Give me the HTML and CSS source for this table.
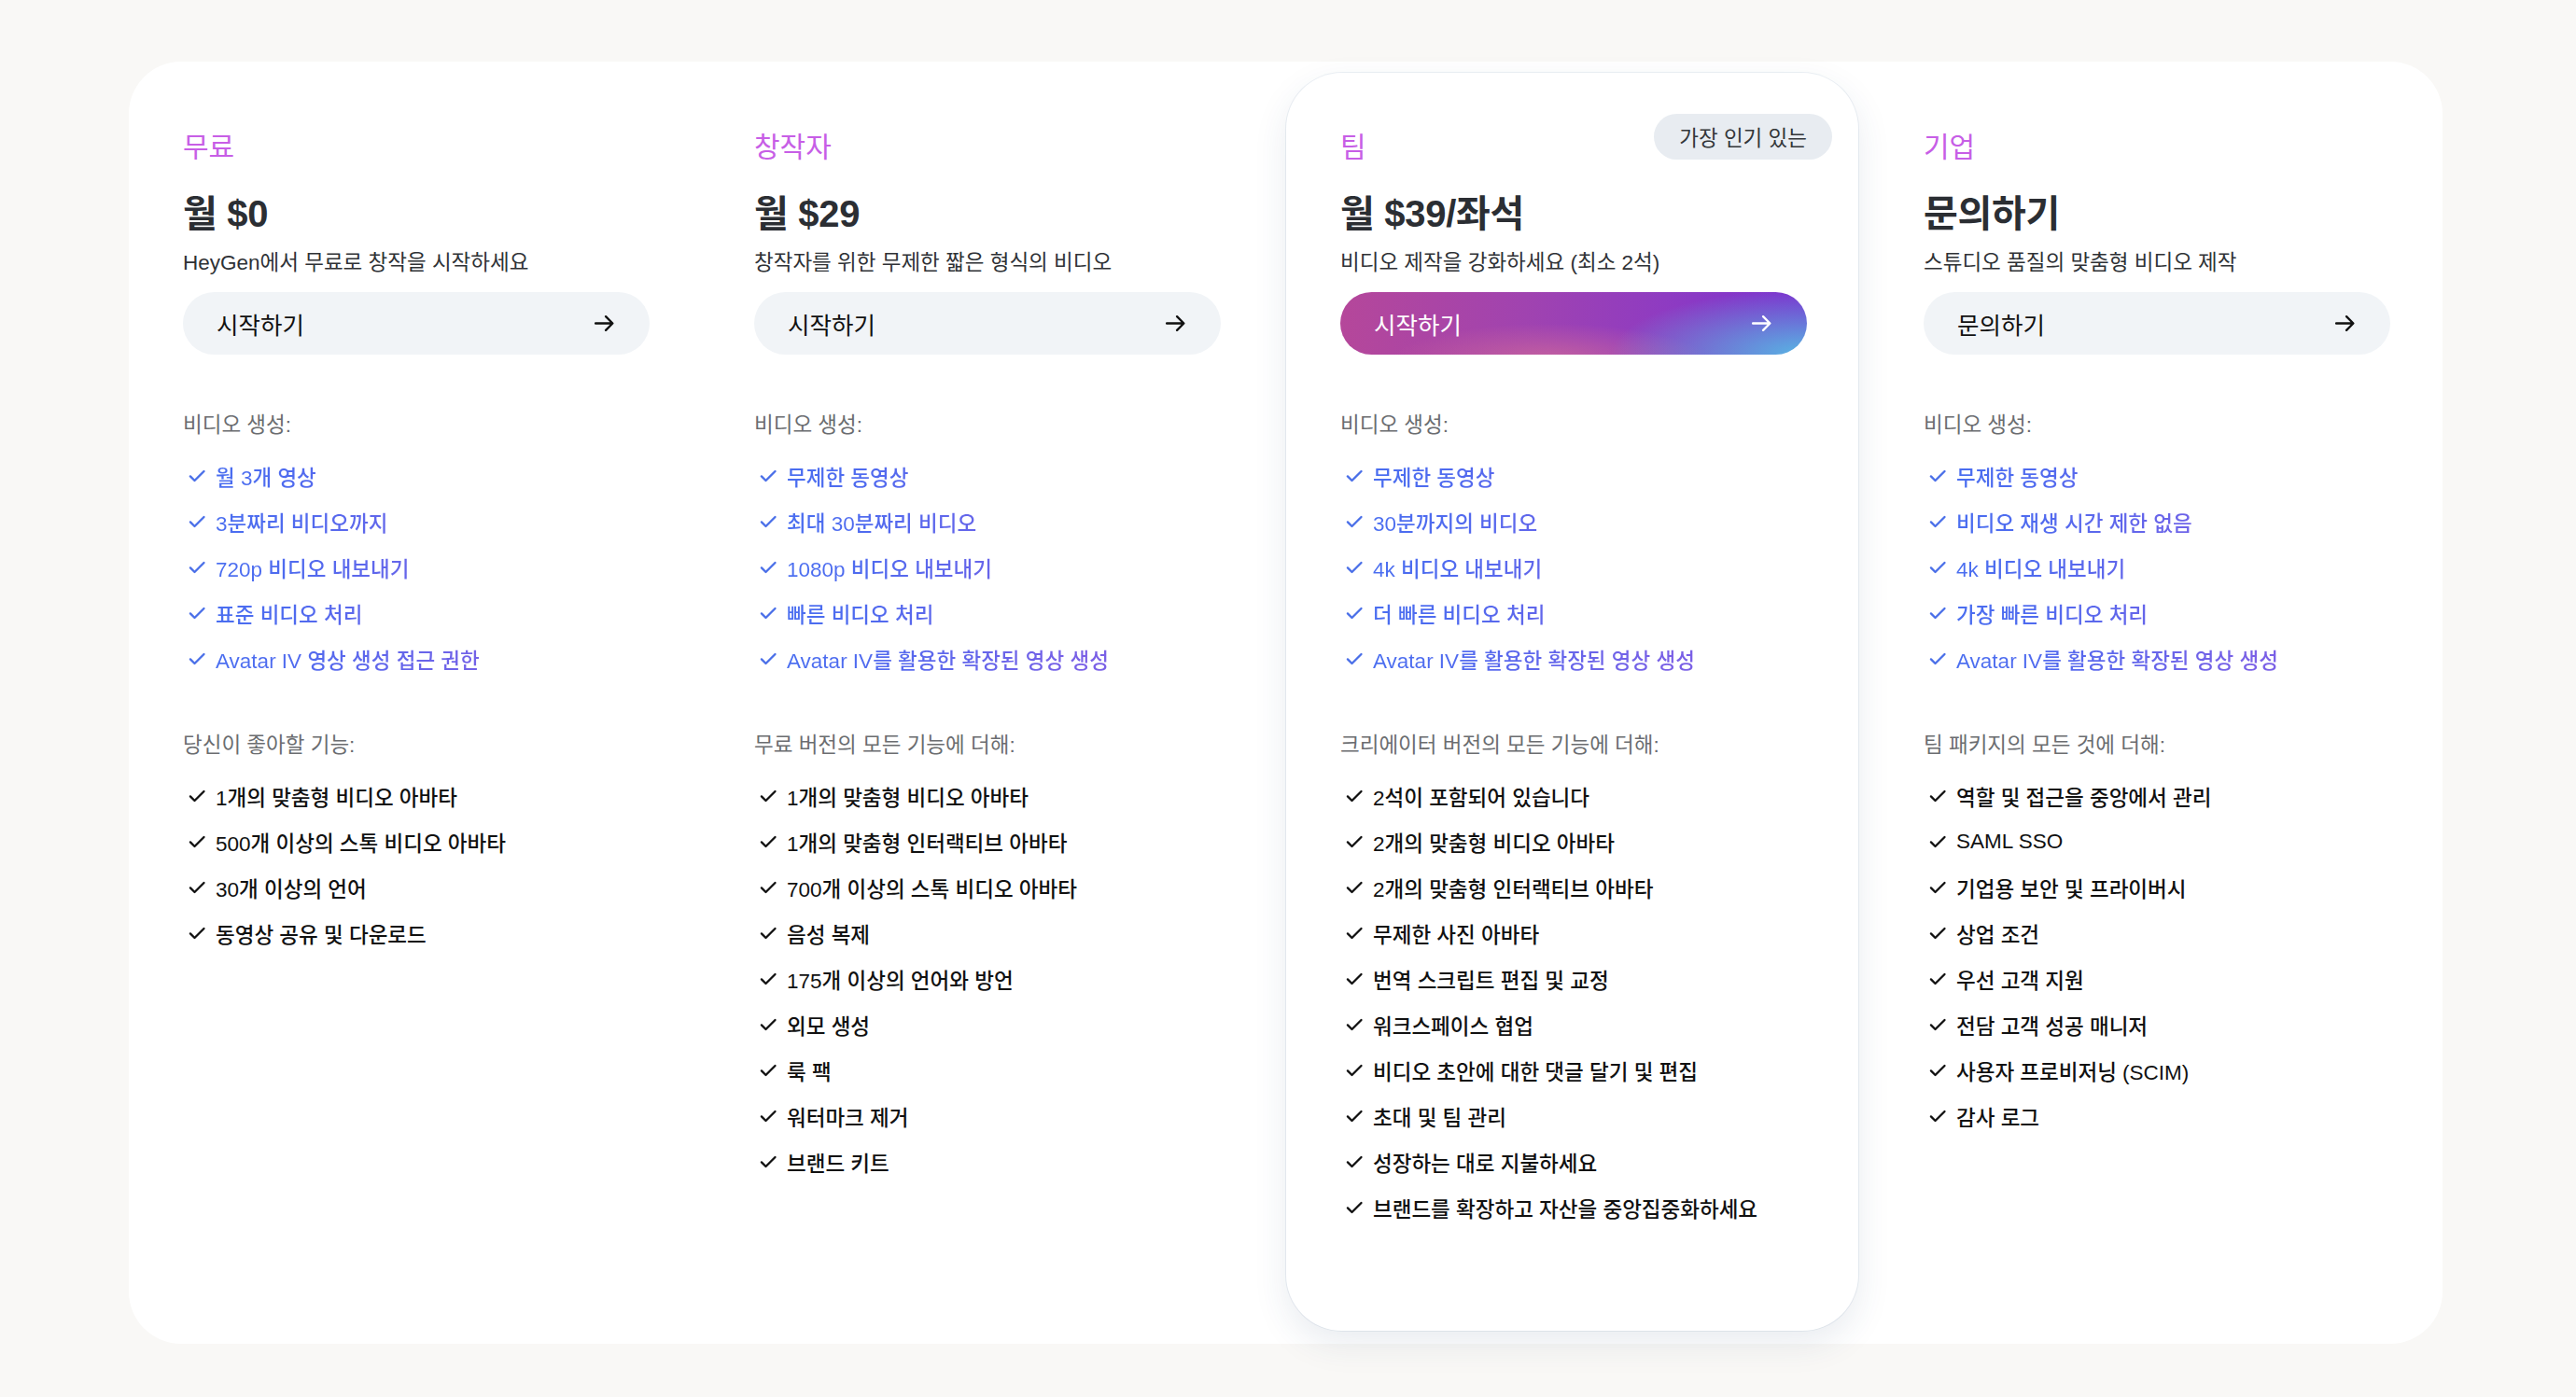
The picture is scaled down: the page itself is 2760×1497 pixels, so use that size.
FILE: index.html
```html
<!DOCTYPE html>
<html lang="ko">
<head>
<meta charset="utf-8">
<title>HeyGen 요금제</title>
<link rel="stylesheet" href="styles.css">
</head>
<body>
<main class="page">
  <section class="pricing">
    <!-- 무료 -->
    <article class="plan">
      <h3 class="plan-name">무료</h3>
      <p class="plan-price">월 $0</p>
      <p class="plan-desc">HeyGen에서 무료로 창작을 시작하세요</p>
      <a class="plan-btn" href="#"><span>시작하기</span><svg class="arrow" viewBox="0 0 24 24"><path d="M3 12h17M13.5 5l7 7-7 7"/></svg></a>
      <p class="list-title list-title-first">비디오 생성:</p>
      <ul class="features features-blue">
        <li><svg class="check" viewBox="0 0 24 24"><path d="M3.5 12.5l5.5 5.5L21 6"/></svg><span>월 3개 영상</span></li>
        <li><svg class="check" viewBox="0 0 24 24"><path d="M3.5 12.5l5.5 5.5L21 6"/></svg><span>3분짜리 비디오까지</span></li>
        <li><svg class="check" viewBox="0 0 24 24"><path d="M3.5 12.5l5.5 5.5L21 6"/></svg><span>720p 비디오 내보내기</span></li>
        <li><svg class="check" viewBox="0 0 24 24"><path d="M3.5 12.5l5.5 5.5L21 6"/></svg><span>표준 비디오 처리</span></li>
        <li><svg class="check" viewBox="0 0 24 24"><path d="M3.5 12.5l5.5 5.5L21 6"/></svg><span>Avatar IV 영상 생성 접근 권한</span></li>
      </ul>
      <p class="list-title">당신이 좋아할 기능:</p>
      <ul class="features features-dark">
        <li><svg class="check" viewBox="0 0 24 24"><path d="M3.5 12.5l5.5 5.5L21 6"/></svg><span>1개의 맞춤형 비디오 아바타</span></li>
        <li><svg class="check" viewBox="0 0 24 24"><path d="M3.5 12.5l5.5 5.5L21 6"/></svg><span>500개 이상의 스톡 비디오 아바타</span></li>
        <li><svg class="check" viewBox="0 0 24 24"><path d="M3.5 12.5l5.5 5.5L21 6"/></svg><span>30개 이상의 언어</span></li>
        <li><svg class="check" viewBox="0 0 24 24"><path d="M3.5 12.5l5.5 5.5L21 6"/></svg><span>동영상 공유 및 다운로드</span></li>
      </ul>
    </article>

    <!-- 창작자 -->
    <article class="plan">
      <h3 class="plan-name">창작자</h3>
      <p class="plan-price">월 $29</p>
      <p class="plan-desc">창작자를 위한 무제한 짧은 형식의 비디오</p>
      <a class="plan-btn" href="#"><span>시작하기</span><svg class="arrow" viewBox="0 0 24 24"><path d="M3 12h17M13.5 5l7 7-7 7"/></svg></a>
      <p class="list-title list-title-first">비디오 생성:</p>
      <ul class="features features-blue">
        <li><svg class="check" viewBox="0 0 24 24"><path d="M3.5 12.5l5.5 5.5L21 6"/></svg><span>무제한 동영상</span></li>
        <li><svg class="check" viewBox="0 0 24 24"><path d="M3.5 12.5l5.5 5.5L21 6"/></svg><span>최대 30분짜리 비디오</span></li>
        <li><svg class="check" viewBox="0 0 24 24"><path d="M3.5 12.5l5.5 5.5L21 6"/></svg><span>1080p 비디오 내보내기</span></li>
        <li><svg class="check" viewBox="0 0 24 24"><path d="M3.5 12.5l5.5 5.5L21 6"/></svg><span>빠른 비디오 처리</span></li>
        <li><svg class="check" viewBox="0 0 24 24"><path d="M3.5 12.5l5.5 5.5L21 6"/></svg><span>Avatar IV를 활용한 확장된 영상 생성</span></li>
      </ul>
      <p class="list-title">무료 버전의 모든 기능에 더해:</p>
      <ul class="features features-dark">
        <li><svg class="check" viewBox="0 0 24 24"><path d="M3.5 12.5l5.5 5.5L21 6"/></svg><span>1개의 맞춤형 비디오 아바타</span></li>
        <li><svg class="check" viewBox="0 0 24 24"><path d="M3.5 12.5l5.5 5.5L21 6"/></svg><span>1개의 맞춤형 인터랙티브 아바타</span></li>
        <li><svg class="check" viewBox="0 0 24 24"><path d="M3.5 12.5l5.5 5.5L21 6"/></svg><span>700개 이상의 스톡 비디오 아바타</span></li>
        <li><svg class="check" viewBox="0 0 24 24"><path d="M3.5 12.5l5.5 5.5L21 6"/></svg><span>음성 복제</span></li>
        <li><svg class="check" viewBox="0 0 24 24"><path d="M3.5 12.5l5.5 5.5L21 6"/></svg><span>175개 이상의 언어와 방언</span></li>
        <li><svg class="check" viewBox="0 0 24 24"><path d="M3.5 12.5l5.5 5.5L21 6"/></svg><span>외모 생성</span></li>
        <li><svg class="check" viewBox="0 0 24 24"><path d="M3.5 12.5l5.5 5.5L21 6"/></svg><span>룩 팩</span></li>
        <li><svg class="check" viewBox="0 0 24 24"><path d="M3.5 12.5l5.5 5.5L21 6"/></svg><span>워터마크 제거</span></li>
        <li><svg class="check" viewBox="0 0 24 24"><path d="M3.5 12.5l5.5 5.5L21 6"/></svg><span>브랜드 키트</span></li>
      </ul>
    </article>

    <!-- 팀 -->
    <article class="plan plan-featured">
      <span class="badge">가장 인기 있는</span>
      <h3 class="plan-name">팀</h3>
      <p class="plan-price">월 $39/좌석</p>
      <p class="plan-desc">비디오 제작을 강화하세요 (최소 2석)</p>
      <a class="plan-btn plan-btn-primary" href="#"><span>시작하기</span><svg class="arrow" viewBox="0 0 24 24"><path d="M3 12h17M13.5 5l7 7-7 7"/></svg></a>
      <p class="list-title list-title-first">비디오 생성:</p>
      <ul class="features features-blue">
        <li><svg class="check" viewBox="0 0 24 24"><path d="M3.5 12.5l5.5 5.5L21 6"/></svg><span>무제한 동영상</span></li>
        <li><svg class="check" viewBox="0 0 24 24"><path d="M3.5 12.5l5.5 5.5L21 6"/></svg><span>30분까지의 비디오</span></li>
        <li><svg class="check" viewBox="0 0 24 24"><path d="M3.5 12.5l5.5 5.5L21 6"/></svg><span>4k 비디오 내보내기</span></li>
        <li><svg class="check" viewBox="0 0 24 24"><path d="M3.5 12.5l5.5 5.5L21 6"/></svg><span>더 빠른 비디오 처리</span></li>
        <li><svg class="check" viewBox="0 0 24 24"><path d="M3.5 12.5l5.5 5.5L21 6"/></svg><span>Avatar IV를 활용한 확장된 영상 생성</span></li>
      </ul>
      <p class="list-title">크리에이터 버전의 모든 기능에 더해:</p>
      <ul class="features features-dark">
        <li><svg class="check" viewBox="0 0 24 24"><path d="M3.5 12.5l5.5 5.5L21 6"/></svg><span>2석이 포함되어 있습니다</span></li>
        <li><svg class="check" viewBox="0 0 24 24"><path d="M3.5 12.5l5.5 5.5L21 6"/></svg><span>2개의 맞춤형 비디오 아바타</span></li>
        <li><svg class="check" viewBox="0 0 24 24"><path d="M3.5 12.5l5.5 5.5L21 6"/></svg><span>2개의 맞춤형 인터랙티브 아바타</span></li>
        <li><svg class="check" viewBox="0 0 24 24"><path d="M3.5 12.5l5.5 5.5L21 6"/></svg><span>무제한 사진 아바타</span></li>
        <li><svg class="check" viewBox="0 0 24 24"><path d="M3.5 12.5l5.5 5.5L21 6"/></svg><span>번역 스크립트 편집 및 교정</span></li>
        <li><svg class="check" viewBox="0 0 24 24"><path d="M3.5 12.5l5.5 5.5L21 6"/></svg><span>워크스페이스 협업</span></li>
        <li><svg class="check" viewBox="0 0 24 24"><path d="M3.5 12.5l5.5 5.5L21 6"/></svg><span>비디오 초안에 대한 댓글 달기 및 편집</span></li>
        <li><svg class="check" viewBox="0 0 24 24"><path d="M3.5 12.5l5.5 5.5L21 6"/></svg><span>초대 및 팀 관리</span></li>
        <li><svg class="check" viewBox="0 0 24 24"><path d="M3.5 12.5l5.5 5.5L21 6"/></svg><span>성장하는 대로 지불하세요</span></li>
        <li><svg class="check" viewBox="0 0 24 24"><path d="M3.5 12.5l5.5 5.5L21 6"/></svg><span>브랜드를 확장하고 자산을 중앙집중화하세요</span></li>
      </ul>
    </article>

    <!-- 기업 -->
    <article class="plan plan-last">
      <h3 class="plan-name">기업</h3>
      <p class="plan-price">문의하기</p>
      <p class="plan-desc">스튜디오 품질의 맞춤형 비디오 제작</p>
      <a class="plan-btn" href="#"><span>문의하기</span><svg class="arrow" viewBox="0 0 24 24"><path d="M3 12h17M13.5 5l7 7-7 7"/></svg></a>
      <p class="list-title list-title-first">비디오 생성:</p>
      <ul class="features features-blue">
        <li><svg class="check" viewBox="0 0 24 24"><path d="M3.5 12.5l5.5 5.5L21 6"/></svg><span>무제한 동영상</span></li>
        <li><svg class="check" viewBox="0 0 24 24"><path d="M3.5 12.5l5.5 5.5L21 6"/></svg><span>비디오 재생 시간 제한 없음</span></li>
        <li><svg class="check" viewBox="0 0 24 24"><path d="M3.5 12.5l5.5 5.5L21 6"/></svg><span>4k 비디오 내보내기</span></li>
        <li><svg class="check" viewBox="0 0 24 24"><path d="M3.5 12.5l5.5 5.5L21 6"/></svg><span>가장 빠른 비디오 처리</span></li>
        <li><svg class="check" viewBox="0 0 24 24"><path d="M3.5 12.5l5.5 5.5L21 6"/></svg><span>Avatar IV를 활용한 확장된 영상 생성</span></li>
      </ul>
      <p class="list-title">팀 패키지의 모든 것에 더해:</p>
      <ul class="features features-dark">
        <li><svg class="check" viewBox="0 0 24 24"><path d="M3.5 12.5l5.5 5.5L21 6"/></svg><span>역할 및 접근을 중앙에서 관리</span></li>
        <li><svg class="check" viewBox="0 0 24 24"><path d="M3.5 12.5l5.5 5.5L21 6"/></svg><span>SAML SSO</span></li>
        <li><svg class="check" viewBox="0 0 24 24"><path d="M3.5 12.5l5.5 5.5L21 6"/></svg><span>기업용 보안 및 프라이버시</span></li>
        <li><svg class="check" viewBox="0 0 24 24"><path d="M3.5 12.5l5.5 5.5L21 6"/></svg><span>상업 조건</span></li>
        <li><svg class="check" viewBox="0 0 24 24"><path d="M3.5 12.5l5.5 5.5L21 6"/></svg><span>우선 고객 지원</span></li>
        <li><svg class="check" viewBox="0 0 24 24"><path d="M3.5 12.5l5.5 5.5L21 6"/></svg><span>전담 고객 성공 매니저</span></li>
        <li><svg class="check" viewBox="0 0 24 24"><path d="M3.5 12.5l5.5 5.5L21 6"/></svg><span>사용자 프로비저닝 (SCIM)</span></li>
        <li><svg class="check" viewBox="0 0 24 24"><path d="M3.5 12.5l5.5 5.5L21 6"/></svg><span>감사 로그</span></li>
      </ul>
    </article>
  </section>
</main>
</body>
</html>
```

FILE: styles.css
```css
* { box-sizing: border-box; }

html, body {
  margin: 0;
  padding: 0;
  background: #f9f8f6;
}

body {
  font-family: "Liberation Sans", "Noto Sans CJK KR", sans-serif;
  color: #1a1a1a;
}

.page {
  padding: 66px 0 56px 138px;
}

.pricing {
  width: 2479px;
  background: #ffffff;
  border-radius: 56px;
  padding: 12px 0 14px 0;
  display: grid;
  grid-template-columns: 612px 628px 613px 626px;
  align-items: start;
}

.plan {
  position: relative;
  padding: 59px 0 0 58px;
}

.plan-last {
  padding-left: 70px;
}

.plan-featured {
  background: #ffffff;
  border-radius: 60px;
  padding-bottom: 108px;
  box-shadow: 0 14px 36px rgba(40, 70, 110, 0.10), 0 0 0 1px rgba(225, 231, 238, 0.6);
}

.badge {
  position: absolute;
  top: 44px;
  right: 28px;
  height: 49px;
  padding: 0 27px;
  border-radius: 25px;
  background: #e8ecf1;
  color: #333639;
  font-size: 22.5px;
  line-height: 49px;
  font-family: "Noto Sans CJK KR", sans-serif;
}

.plan-name {
  margin: 0;
  font-family: "Noto Sans CJK KR", sans-serif;
  font-weight: 400;
  font-size: 30px;
  line-height: 36px;
  color: #c75ee6;
}

.plan-price {
  margin: 33px 0 0;
  font-size: 40px;
  line-height: 46px;
  font-weight: 700;
  color: #2b2e33;
  letter-spacing: -0.3px;
}

.plan-desc {
  margin: 15px 0 0;
  font-size: 22.5px;
  line-height: 30px;
  color: #2f3236;
}

.plan-btn {
  margin-top: 16px;
  width: 500px;
  height: 67px;
  border-radius: 34px;
  background: #f1f4f7;
  display: flex;
  align-items: center;
  justify-content: space-between;
  padding: 0 36px 0 36px;
  text-decoration: none;
  color: #111111;
  font-family: "Noto Sans CJK KR", sans-serif;
  font-size: 25.5px;
}

.plan-btn-primary {
  color: #ffffff;
  background:
    radial-gradient(ellipse 210px 70px at 100% 100%, rgba(86, 190, 228, 0.95) 0%, rgba(86, 190, 228, 0) 100%),
    radial-gradient(ellipse 170px 40px at 45% 110%, rgba(214, 110, 150, 0.7) 0%, rgba(214, 110, 150, 0) 100%),
    linear-gradient(90deg, #b5479a 0%, #a043b0 40%, #8e3bc2 70%, #7a31cf 100%);
}

.arrow {
  width: 25px;
  height: 25px;
  fill: none;
  stroke: currentColor;
  stroke-width: 2.3;
  stroke-linecap: round;
  stroke-linejoin: round;
}

.list-title {
  margin: 61px 0 0;
  font-size: 22.5px;
  line-height: 30px;
  color: #6b6d70;
}

.features {
  list-style: none;
  margin: 14px 0 0;
  padding: 0;
}

.list-title-first + .features {
  margin-bottom: 54px;
}

.features li {
  display: flex;
  align-items: center;
  height: 49px;
  padding-left: 5px;
  gap: 10px;
  font-size: 22.5px;
}

.check {
  width: 20px;
  height: 20px;
  flex: none;
  fill: none;
  stroke-width: 2.8;
  stroke-linecap: round;
  stroke-linejoin: round;
}

.features-blue li {
  font-weight: 500;
}

.features-blue .check {
  stroke: #4a6fe8;
}

.features-blue span {
  background-image: linear-gradient(90deg, #4a6ef0 0px, #4f6bef 80px, #7a60e6 320px);
  -webkit-background-clip: text;
  background-clip: text;
  color: transparent;
}

.features-dark li {
  color: #111111;
  font-weight: 500;
}

.features-dark .check {
  stroke: #111111;
}

.list-title-first + .features + .list-title {
  margin-top: 0;
}
```
